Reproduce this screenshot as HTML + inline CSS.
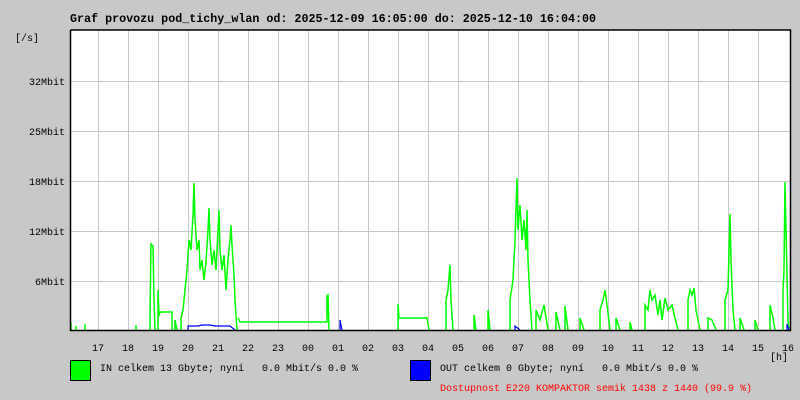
<!DOCTYPE html>
<html><head><meta charset="utf-8"><style>
body{margin:0;background:#c8c8c8;width:800px;height:400px;overflow:hidden}
svg{display:block}
text{font-family:"Liberation Mono","DejaVu Sans Mono",monospace;white-space:pre}
</style></head><body>
<svg width="800" height="400" xmlns="http://www.w3.org/2000/svg" xml:space="preserve">
<rect width="800" height="400" fill="#c8c8c8"/>
<text x="70" y="22" font-size="11.7" font-weight="bold" fill="#000">Graf provozu pod_tichy_wlan od: 2025-12-09 16:05:00 do: 2025-12-10 16:04:00</text>
<rect x="70" y="30" width="720" height="300" fill="#fff"/>
<g stroke="#c8c8c8" stroke-width="1">
<path d="M98.5 31V330M128.5 31V330M158.5 31V330M188.5 31V330M218.5 31V330M248.5 31V330M278.5 31V330M308.5 31V330M338.5 31V330M368.5 31V330M398.5 31V330M428.5 31V330M458.5 31V330M488.5 31V330M518.5 31V330M548.5 31V330M578.5 31V330M608.5 31V330M638.5 31V330M668.5 31V330M698.5 31V330M728.5 31V330M758.5 31V330"/>
<path d="M71 81.5H790M71 131.5H790M71 181.5H790M71 231.5H790M71 281.5H790"/>
</g>
<g fill="none" stroke="#00ff00" stroke-width="1.5">
<path d="M71 330V322V330M76 330V326M85 330V324V330M136 330V325V330M150 330V315L151 244L153 246L154 300L155 330M158 330V290L159 316L160 312L165 312H172V330M175 330V320L177 330M181 330V318L183 310L185 290L187 270L189 240L191 250L193 215L194 183L195 220L197 250L199 240L200 270L202 260L204 280L206 262L208 230L209 208L210 240L212 265L214 250L216 270L218 230L219 210L220 250L222 270L224 255L226 290L228 260L230 240L231 225L232 245L234 275L235 300L237 330"/>
<path d="M238 318L240 322H327V296L328 295L329 330"/>
<path d="M398 330V304L399 318H427L429 330"/>
<path d="M446 330V300L448 290L450 265L451 300L453 330M474 330V315L476 330M488 330V310L490 330"/>
<path d="M510 330V300L513 280L515 240L517 178L518 230L520 205L522 240L524 220L526 250L527 210L528 260L530 300L532 330M536 330V310L540 320L544 305L548 330M556 330V312L560 330M565 330V306L568 330M580 330V318L584 330"/>
<path d="M600 330V310L603 300L605 290L607 305L610 330M616 330V318L620 330M630 330V322L632 330"/>
<path d="M645 330V305L648 310L650 290L652 300L655 295L658 315L660 300L662 320L665 298L668 310L672 305L675 318L678 330M688 330V300L690 290L692 295L694 288L696 310L700 330M708 330V318L712 320L716 330M725 330V300L728 290L730 214L731 260L733 310L735 330M740 330V318L744 330M755 330V320L758 330M770 330V305L773 318L775 330M783 330V290L784 270L785 182L786 230L788 320L789 330"/>
</g>
<g fill="none" stroke="#0000ff" stroke-width="1.2">
<path d="M188 330V326H198L202 325H210L215 326H230L235 330M340 330V320L342 330M515 330V326L520 330M787 330V324L789 330"/>
</g>
<path d="M70.5 30V330.5H790.5V30H70.5" fill="none" stroke="#000" stroke-width="1.5"/>
<g font-size="10" fill="#000">
<text x="15" y="41">[/s]</text>
<text x="65" y="85" text-anchor="end">32Mbit</text>
<text x="65" y="135" text-anchor="end">25Mbit</text>
<text x="65" y="185" text-anchor="end">18Mbit</text>
<text x="65" y="235" text-anchor="end">12Mbit</text>
<text x="65" y="285" text-anchor="end">6Mbit</text>
<g text-anchor="middle">
<text x="98" y="351">17</text><text x="128" y="351">18</text><text x="158" y="351">19</text><text x="188" y="351">20</text><text x="218" y="351">21</text><text x="248" y="351">22</text><text x="278" y="351">23</text><text x="308" y="351">00</text><text x="338" y="351">01</text><text x="368" y="351">02</text><text x="398" y="351">03</text><text x="428" y="351">04</text><text x="458" y="351">05</text><text x="488" y="351">06</text><text x="518" y="351">07</text><text x="548" y="351">08</text><text x="578" y="351">09</text><text x="608" y="351">10</text><text x="638" y="351">11</text><text x="668" y="351">12</text><text x="698" y="351">13</text><text x="728" y="351">14</text><text x="758" y="351">15</text><text x="788" y="351">16</text>
</g>
<text x="770" y="360">[h]</text>
<rect x="70.5" y="360.5" width="20" height="20" fill="#00ff00" stroke="#000"/>
<text x="100" y="371">IN celkem 13 Gbyte; nyní   0.0 Mbit/s 0.0 %</text>
<rect x="410.5" y="360.5" width="20" height="20" fill="#0000ff" stroke="#000"/>
<text x="440" y="371">OUT celkem 0 Gbyte; nyní   0.0 Mbit/s 0.0 %</text>
<text x="440" y="391" fill="#ff0000">Dostupnost E220 KOMPAKTOR semik 1438 z 1440 (99.9 %)</text>
</g>
</svg>
</body></html>
